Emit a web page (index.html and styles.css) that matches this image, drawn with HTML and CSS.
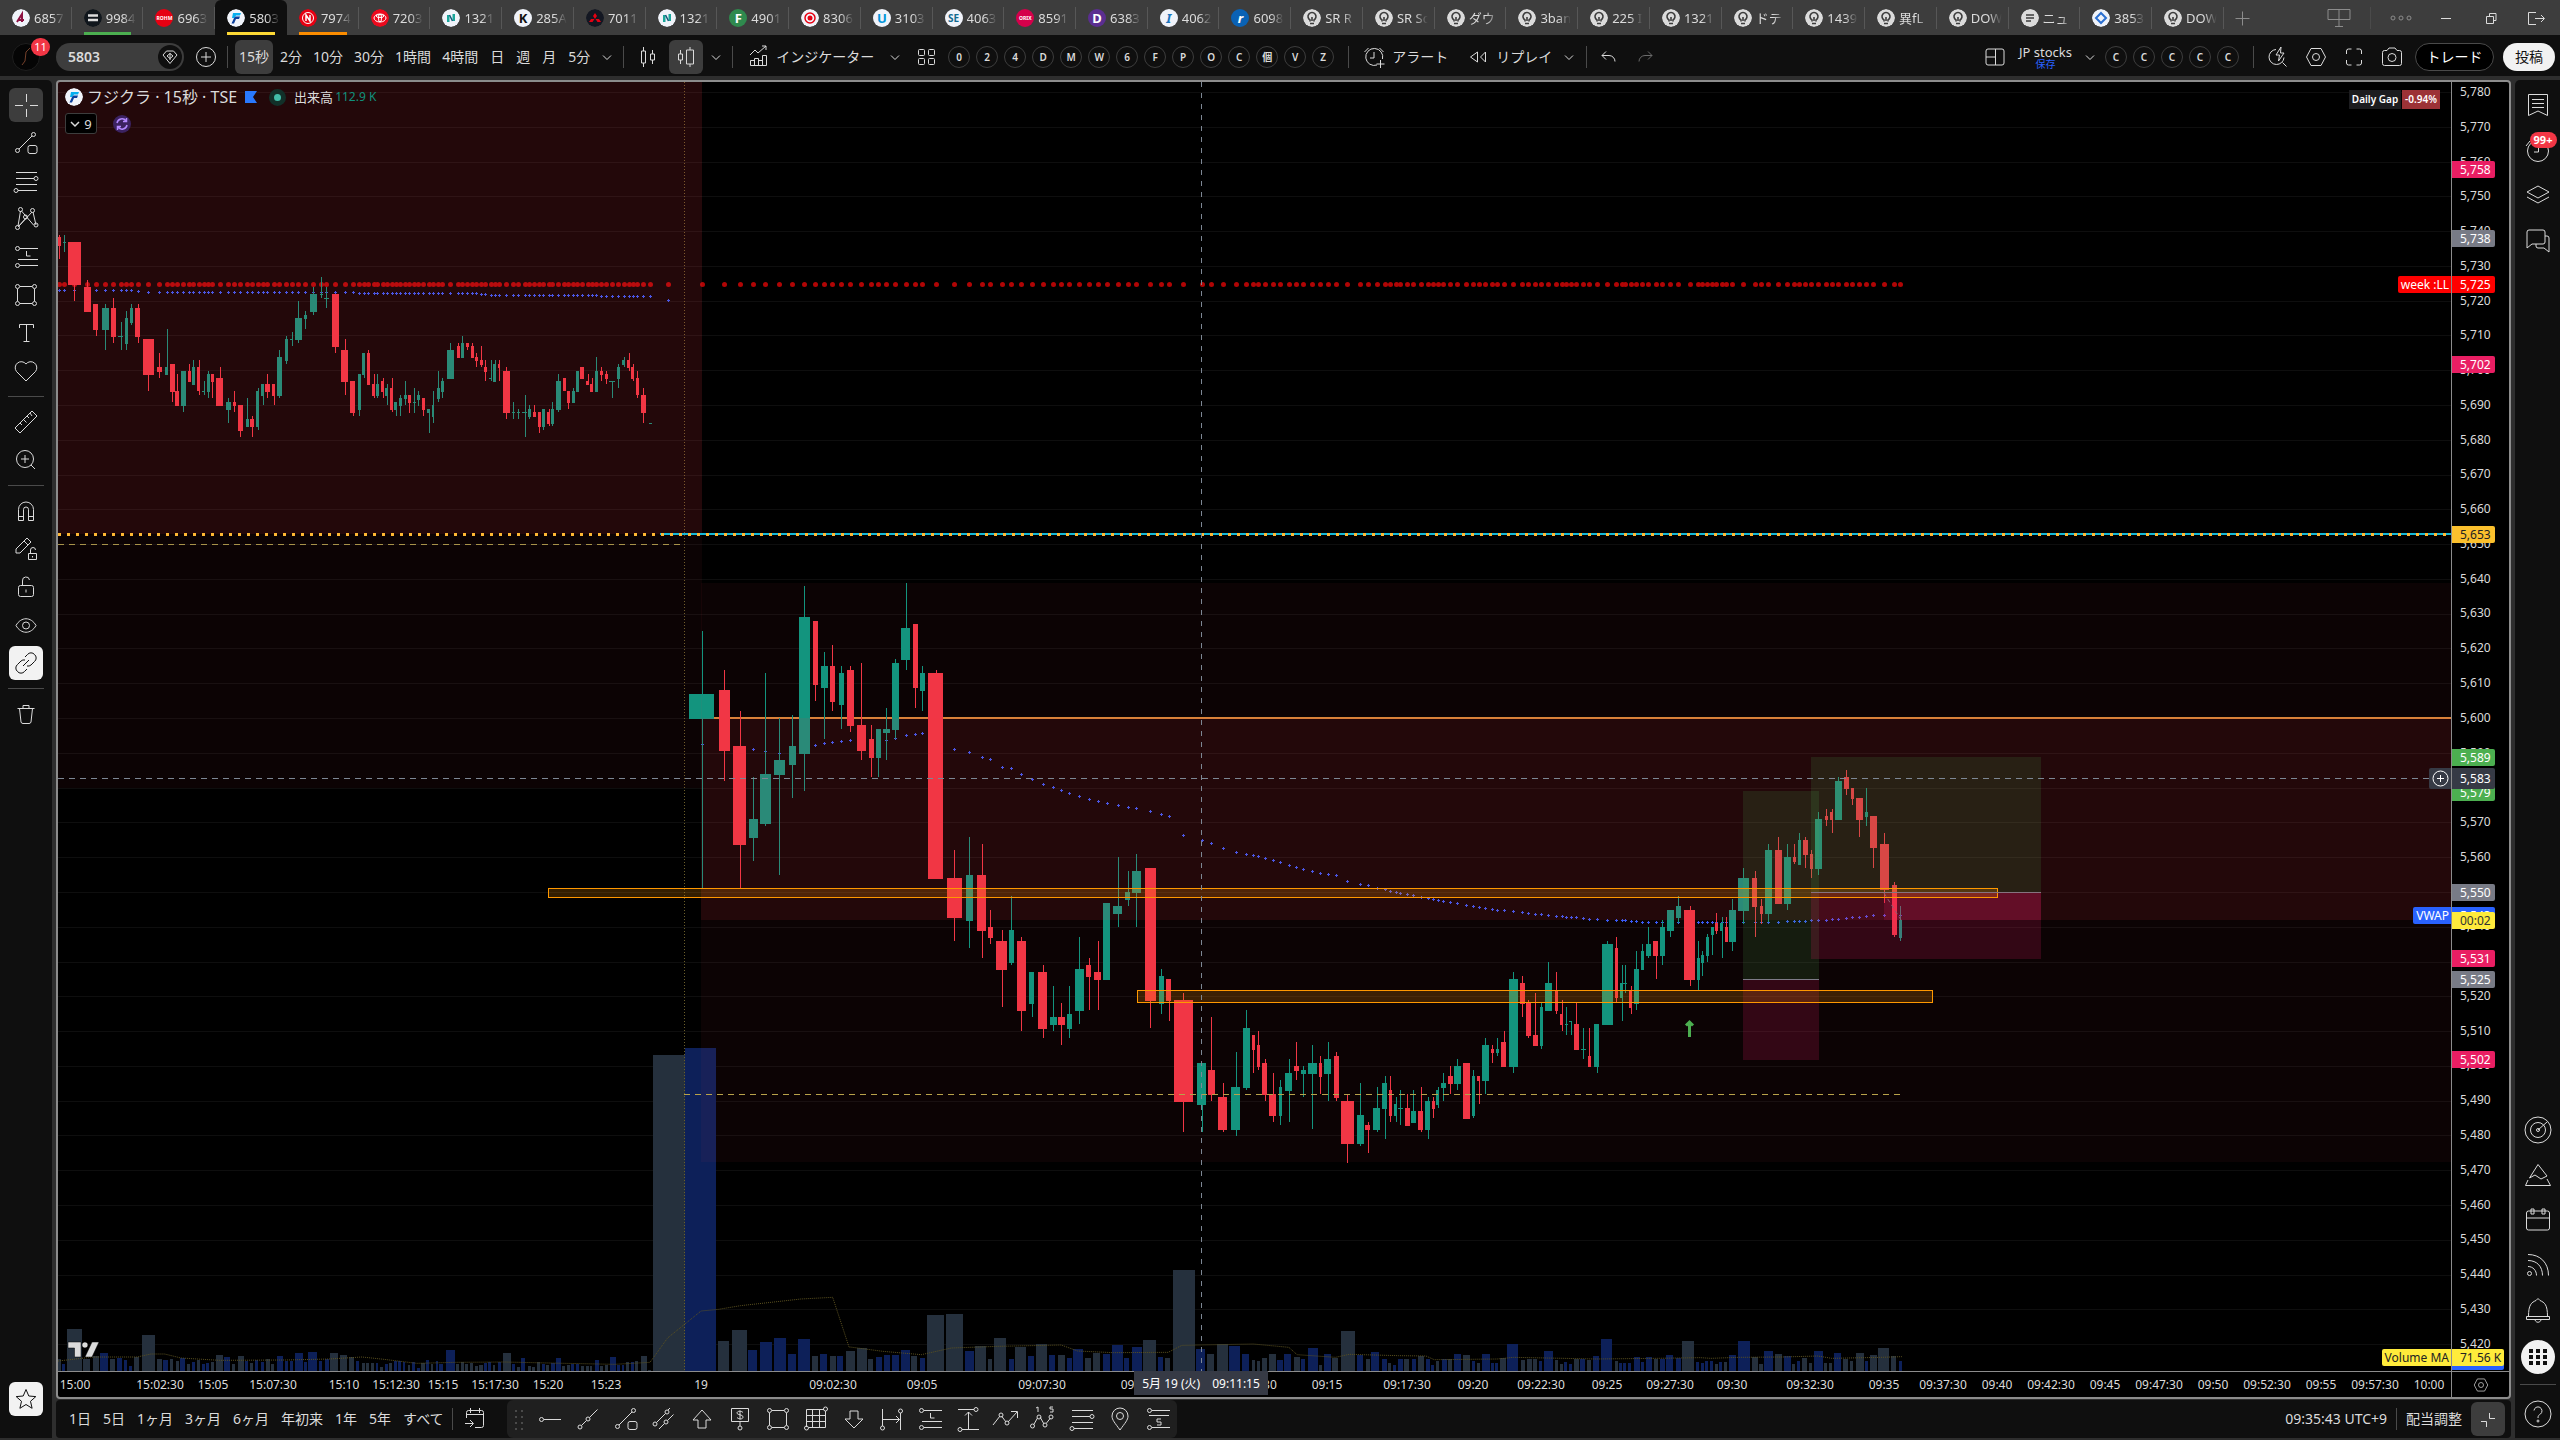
FILE: index.html
```html
<!DOCTYPE html>
<html lang="ja">
<head>
<meta charset="utf-8">
<title>5803 フジクラ</title>
<link rel="stylesheet" href="styles.css">
</head>
<body>
<svg class="defs" aria-hidden="true">
<symbol id="bulb" viewBox="0 0 18 18"><circle cx="9" cy="9" r="9" fill="#dbdbdb"/><path d="M7 12.500V11a4 4 0 1 1 4 0v1.500M7 14.500h4M9 8v4" fill="none" stroke="#3d3d3d" stroke-width="1.600"/></symbol>
<symbol id="fuji" viewBox="0 0 18 18"><circle cx="9" cy="9" r="9" fill="#f0f3fa"/><path d="M6 4h8l-1 2.500H9L7.500 9H5z" fill="#06aef0"/><path d="M8.500 7.500H13L12 10H9l-2 4.500H4.500L7 9z" fill="#0b3f9c"/></symbol>
<symbol id="next" viewBox="0 0 18 18"><circle cx="9" cy="9" r="9" fill="#f0f3fa"/><path d="M5 6h2.500v7H5zM10.500 5H13v7h-2.500z" fill="#1aa59a"/><path d="M7.500 6l3 6" stroke="#14587a" stroke-width="1.500"/></symbol>
<symbol id="chev" viewBox="0 0 28 28"><path d="M10 12.500l4 4 4-4"/></symbol>
<symbol id="plus-o" viewBox="0 0 28 28"><circle cx="14" cy="14" r="9.500"/><path d="M14 9v10M9 14h10"/></symbol>
<symbol id="candle" viewBox="0 0 28 28"><path d="M9.500 4v4M9.500 20v4M7.500 8h4v12h-4zM18.500 7v4M18.500 17v4M16.500 11h4v6h-4z"/></symbol>
<symbol id="volcandle" viewBox="0 0 28 28"><path d="M8.500 7v4M8.500 17v4M6.500 11h4v6h-4zM18 4v3M18 21v3M14.500 7h7v14h-7z"/></symbol>
<symbol id="indic" viewBox="0 0 28 28"><path d="M6 12l5-5 3 3 8-7M18 3h4v4M6.500 22.500v-5h4v5M10.500 22.500v-7h4v7M14.500 22.500v-5h4v5M18.500 22.500v-10h4v10h-16"/></symbol>
<symbol id="tiles" viewBox="0 0 28 28"><rect x="6.500" y="6.500" width="6" height="6" rx="1"/><rect x="16.500" y="6.500" width="6" height="6" rx="1"/><rect x="6.500" y="15.500" width="6" height="6" rx="1"/><rect x="16.500" y="15.500" width="6" height="6" rx="1"/></symbol>
<symbol id="alarm" viewBox="0 0 28 28"><path d="M17 22a8.500 8.500 0 1 1 5.500-6M14 9v6h-4M4.500 9l4-4M23.500 9l-4-4M20.500 17v8M16.500 21h8"/></symbol>
<symbol id="rewind" viewBox="0 0 28 28"><path d="M13.500 9l-7 5 7 5zM21.500 9l-5 5 5 5z"/></symbol>
<symbol id="undo" viewBox="0 0 28 28"><path d="M12 8.500l-4 4 4 4M8 12.500h7a6 6 0 0 1 6 6"/></symbol>
<symbol id="redo" viewBox="0 0 28 28"><path d="M16 8.500l4 4-4 4M20 12.500h-7a6 6 0 0 0-6 6"/></symbol>
<symbol id="layout" viewBox="0 0 28 28"><rect x="5" y="6" width="18" height="16" rx="2"/><path d="M14.500 6v16M5 14h9"/></symbol>
<symbol id="quick" viewBox="0 0 28 28"><path d="M12 6.500a7.500 7.500 0 1 0 8 8M18.500 19.500l4 4M17 4l-5 8h3.500l-1 6 5.500-8h-3.500z"/></symbol>
<symbol id="hex" viewBox="0 0 28 28"><path d="M9 5.500h10l4.500 8.500-4.500 8.500H9L4.500 14z"/><circle cx="14" cy="14" r="3.500"/></symbol>
<symbol id="full" viewBox="0 0 28 28"><path d="M6.500 11V8a2 2 0 0 1 2-2h3M16.500 6h3a2 2 0 0 1 2 2v3M21.500 17v3a2 2 0 0 1-2 2h-3M11.500 22h-3a2 2 0 0 1-2-2v-3"/></symbol>
<symbol id="camera" viewBox="0 0 28 28"><path d="M4.500 9.500a2 2 0 0 1 2-2H9l2-2.500h6l2 2.500h2.500a2 2 0 0 1 2 2v11a2 2 0 0 1-2 2h-15a2 2 0 0 1-2-2z"/><circle cx="14" cy="14.500" r="4"/></symbol>
<symbol id="cross" viewBox="0 0 28 28"><path d="M14.500 3v8M14.500 18v8M3 14.500h8M18 14.500h8"/></symbol>
<symbol id="line-sq" viewBox="0 0 28 28"><path d="M7 20L20 7"/><circle cx="5.500" cy="21.500" r="2"/><circle cx="21.500" cy="5.500" r="2"/><rect x="16" y="16.500" width="9" height="8" rx="2"/></symbol>
<symbol id="fib" viewBox="0 0 28 28"><path d="M4 5.500h21M4 11.500h18M4 17.500h21M6 23.500h19"/><circle cx="24" cy="11.500" r="2"/><circle cx="4" cy="23.500" r="2"/></symbol>
<symbol id="xabcd" viewBox="0 0 28 28"><path d="M6 21L8.500 6M9.500 6l12 14M7 21L20 7M21 7l3 13M6 22l8-9"/><circle cx="5.500" cy="22.500" r="2"/><circle cx="8.500" cy="4.500" r="2"/><circle cx="20.500" cy="5.500" r="2"/><circle cx="24" cy="20" r="2"/><circle cx="13.500" cy="12" r="2"/></symbol>
<symbol id="longpos" viewBox="0 0 28 28"><path d="M8 5.500h18M8 22.500h18M6 16.500h20M14.500 8v5h4"/><circle cx="5.500" cy="5.500" r="2"/><circle cx="5.500" cy="22.500" r="2"/></symbol>
<symbol id="rect" viewBox="0 0 28 28"><path d="M8 5.500h12M8 22.500h12M5.500 8v12M22.500 8v12"/><circle cx="5.500" cy="5.500" r="2"/><circle cx="22.500" cy="5.500" r="2"/><circle cx="5.500" cy="22.500" r="2"/><circle cx="22.500" cy="22.500" r="2"/></symbol>
<symbol id="text" viewBox="0 0 28 28"><path d="M7.500 9V5.500h14V9M14.500 5.500v17M11.500 22.500h6"/></symbol>
<symbol id="heart" viewBox="0 0 28 28"><path d="M14 24L4.500 14.500a6 6 0 0 1 9.500-7.500 6 6 0 0 1 9.500 7.500z"/></symbol>
<symbol id="ruler" viewBox="0 0 28 28"><path d="M3 20L20 3l5 5L8 25zM8 15l2 2M11.500 11.500l3 3M15 8l2 2M18 5l2 3"/></symbol>
<symbol id="zoomin" viewBox="0 0 28 28"><circle cx="13" cy="13" r="8.500"/><path d="M19 19l4 4M13 9v8M9 13h8"/></symbol>
<symbol id="magnet" viewBox="0 0 28 28"><path d="M6.500 23.500v-11a7.500 7.500 0 0 1 15 0v11h-5v-11a2.500 2.500 0 0 0-5 0v11zM6.500 19.500h5M16.500 19.500h5"/></symbol>
<symbol id="penlock" viewBox="0 0 28 28"><path d="M4 18v-4L15 3l4 4L8 18zM12 6l4 4M16.500 18.500h8v6h-8zM18.500 18.500V15a2.500 2.500 0 0 1 5 0M20.500 21v1.500"/></symbol>
<symbol id="lock" viewBox="0 0 28 28"><rect x="6.500" y="12.500" width="15" height="11" rx="2"/><path d="M10.500 12.500V8a3.500 3.500 0 0 1 7-1M14 16.500v3"/></symbol>
<symbol id="eye" viewBox="0 0 28 28"><path d="M4 14.500c5-9 15-9 20 0-5 9-15 9-20 0z"/><circle cx="14" cy="14.500" r="3.500"/></symbol>
<symbol id="link" viewBox="0 0 28 28"><path d="M13 8l2.500-2.500a4.500 4.500 0 0 1 7 0 4.500 4.500 0 0 1 0 7L19 16a4.500 4.500 0 0 1-4 1M15 20l-2.500 2.500a4.500 4.500 0 0 1-7 0 4.500 4.500 0 0 1 0-7L9 12a4.500 4.500 0 0 1 4-1M11 17l6-6"/></symbol>
<symbol id="trash" viewBox="0 0 28 28"><path d="M5.500 8.500h17M11 8V5.500h6V8M7.500 8.500L9 22a2 2 0 0 0 2 1.500h6a2 2 0 0 0 2-1.500l1.500-13.500"/></symbol>
<symbol id="star" viewBox="0 0 28 28"><path d="M14 4.500l2.800 6.500 7 .6-5.300 4.700 1.600 7L14 19.500l-6.100 3.800 1.600-7-5.300-4.700 7-.6z"/></symbol>
<symbol id="list" viewBox="0 0 28 28"><path d="M4.500 3.500h19v21L14 20l-9.500 4.500zM8 8.500h12M8 12.500h12M8 16.500h12"/></symbol>
<symbol id="clock" viewBox="0 0 28 28"><circle cx="14" cy="15" r="10.500"/><path d="M14.500 9v7H10M2 10l4-5"/></symbol>
<symbol id="layers" viewBox="0 0 28 28"><path d="M14 5l11 6-11 6-11-6zM3 16l11 6 11-6"/></symbol>
<symbol id="chat" viewBox="0 0 28 28"><path d="M3 22V6a2 2 0 0 1 2-2h14a2 2 0 0 1 2 2v10a2 2 0 0 1-2 2H8zM12 18v2a2 2 0 0 0 2 2h6l5 4V12a2 2 0 0 0-2-2h-2"/></symbol>
<symbol id="radar" viewBox="0 0 28 28"><circle cx="14" cy="14" r="13"/><circle cx="14" cy="14" r="7.500"/><circle cx="14" cy="14" r="1.500"/><path d="M14 14l9-8"/></symbol>
<symbol id="pyramid" viewBox="0 0 28 28"><path d="M14 3.500l9 11.500-6 3-6-4-5.500 3zM4 19l-2.500 5.500h25L23 18"/></symbol>
<symbol id="cal" viewBox="0 0 28 28"><rect x="2.500" y="5" width="23" height="19" rx="2"/><path d="M2.500 12h23M7 3h3v5H7zM18 3h3v5h-3z"/></symbol>
<symbol id="rss" viewBox="0 0 28 28"><circle cx="5.500" cy="22.500" r="2"/><path d="M4 3.500c12 0 20.500 8 20.500 21M4 9.500c9 0 14.500 6 14.500 15M4 15.500c5 0 8.500 4 8.500 9"/></symbol>
<symbol id="bell" viewBox="0 0 28 28"><path d="M4.500 20.500c0-12 3-14 7.500-16l2-2 2 2c4.500 2 7.500 4 7.500 16M2.500 20.500h23v3h-23zM11 24c1 3 5 3 6 0"/></symbol>
<symbol id="apps" viewBox="0 0 28 28"><path d="M5 6h4v4H5zM12 6h4v4h-4zM19 6h4v4h-4zM5 12h4v4H5zM12 12h4v4h-4zM19 12h4v4h-4zM5 18h4v4H5zM12 18h4v4h-4zM19 18h4v4h-4z" fill="#0f0f0f" stroke="none"/></symbol>
<symbol id="help" viewBox="0 0 28 28"><circle cx="14" cy="14" r="13"/><path d="M10 10.500a4 4 0 1 1 6.500 3.500C15 15 14 15.500 14 18"/><circle cx="14" cy="21" r="1"/></symbol>
<symbol id="goto" viewBox="0 0 28 28"><path d="M5.500 13V7.500a2 2 0 0 1 2-2h13a2 2 0 0 1 2 2v13a2 2 0 0 1-2 2H14M5.500 9.500h17M9.500 3v5M18.500 3v5M4 18.500h8M9 15l3.500 3.500L9 22"/></symbol>
<symbol id="hray" viewBox="0 0 28 28"><circle cx="5.500" cy="14.500" r="2"/><path d="M8 14.500h17"/></symbol>
<symbol id="trend" viewBox="0 0 28 28"><circle cx="6" cy="22" r="2"/><circle cx="14" cy="14" r="2"/><path d="M7.500 20.500l5-5M15.500 12.500l8-8"/></symbol>
<symbol id="channel" viewBox="0 0 28 28"><circle cx="5" cy="19" r="2"/><circle cx="17" cy="7" r="2"/><circle cx="16" cy="17" r="2"/><path d="M6.500 17.500l9-9M9 24l5.500-5.500M17.500 15.500l6-6M18 5l2-2"/></symbol>
<symbol id="up" viewBox="0 0 28 28"><path d="M14 5l9 10h-5v8h-8v-8H5z"/></symbol>
<symbol id="down" viewBox="0 0 28 28"><path d="M14 23l9-9h-5V6h-8v8H5z"/></symbol>
<symbol id="price" viewBox="0 0 28 28"><path d="M5.500 3.500h17v13h-17zM14 16.500V21M17 7.500c-2-2-6-1.500-6 .5s6 1.500 6 4-4 2.500-6 .5M14 5.500v9"/><circle cx="14" cy="23" r="2"/></symbol>
<symbol id="grid" viewBox="0 0 28 28"><path d="M4.500 4.500H22M4.500 4.500V22M7 22.500h16.500V6M4.500 10.500h19M4.500 16.500h19M10.500 4.500v18M17.500 4.500v18"/><circle cx="23.500" cy="4" r="2"/><circle cx="4.500" cy="23" r="2"/></symbol>
<symbol id="drange" viewBox="0 0 28 28"><path d="M4.500 4v17M22.500 8v17M4.500 14.500h17M18 11l3.500 3.500L18 18"/><circle cx="22.500" cy="6" r="2"/><circle cx="4.500" cy="23" r="2"/></symbol>
<symbol id="prange" viewBox="0 0 28 28"><path d="M4 4.500h16M8 24.500h17M14.500 24V7M11 10.500L14.500 7l3.500 3.500"/><circle cx="22" cy="4.500" r="2"/><circle cx="6" cy="24.500" r="2"/></symbol>
<symbol id="zig" viewBox="0 0 28 28"><path d="M1 20l7-9M9.500 11l4.500 6M16 17l9-10M19 6.500h6.500V13"/><circle cx="9" cy="10" r="2"/><circle cx="15" cy="18" r="2"/></symbol>
<symbol id="wave" viewBox="0 0 28 28"><path d="M3.500 20l4-7M10 12l4 7M16.500 18l4-5"/><circle cx="2.500" cy="21" r="2"/><circle cx="9" cy="12" r="2"/><circle cx="15" cy="20" r="2"/><circle cx="21" cy="12" r="2"/><path d="M6 3l2-1v5M23 2h-3v2h3v3h-3"/></symbol>
<symbol id="pin" viewBox="0 0 28 28"><path d="M14 25C9 18 6 15 6 11a8 8 0 0 1 16 0c0 4-3 7-8 14z"/><circle cx="14" cy="11" r="3.500"/></symbol>
<symbol id="shortpos" viewBox="0 0 28 28"><path d="M8 5.500h18M8 22.500h18M5 10.500h20M17 14h-4v3h4v3h-4"/><circle cx="5.500" cy="5.500" r="2"/><circle cx="5.500" cy="22.500" r="2"/></symbol>
<symbol id="shrink" viewBox="0 0 28 28"><path d="M15.500 8v5.500H21M7 16.500h5.500V22"/></symbol>
<symbol id="board" viewBox="0 0 28 28"><path d="M3 5.500h22v10H3zM14 15.500V22M10 22.500h8M14 5.500v10"/></symbol>
<symbol id="dots" viewBox="0 0 28 28"><circle cx="6" cy="14" r="2"/><circle cx="14" cy="14" r="2"/><circle cx="22" cy="14" r="2"/></symbol>
<symbol id="minus" viewBox="0 0 28 28"><path d="M9 14.500h10"/></symbol>
<symbol id="restore" viewBox="0 0 28 28"><path d="M9.500 12.500h7v7h-7zM12.500 12V9.500h6.500v7h-2.500"/></symbol>
<symbol id="exit" viewBox="0 0 28 28"><path d="M14 8.500H6.500v12H14M13 14.500h9M19 11l3.500 3.500L19 18"/></symbol>
<symbol id="plus" viewBox="0 0 28 28"><path d="M14.500 7.500v14M7.500 14.500h14"/></symbol>
</svg>

<header class="tabbar">
<nav class="tabs" id="tabs">
<a class="tab" href="#"><svg class="logo"><circle cx="9" cy="9" r="9" fill="#f0f3fa"/><path d="M5 13l5-8v8M7 11h5" fill="none" stroke="#8d1243" stroke-width="2"/></svg><span>6857</span></a>
<a class="tab green" href="#"><svg class="logo"><circle cx="9" cy="9" r="9" fill="#10161c"/><path d="M4 6.500h10M4 11h10" stroke="#dbdbdb" stroke-width="2.500"/></svg><span>9984</span></a>
<a class="tab" href="#"><b class="logo mini" style="--c:#e60012">ROHM</b><span>6963</span></a>
<a class="tab active yellow" href="#"><svg class="logo"><use href="#fuji"/></svg><span>5803</span></a>
<a class="tab orange" href="#"><svg class="logo"><circle cx="9" cy="9" r="9" fill="#e60012"/><circle cx="9" cy="9" r="5.500" fill="none" stroke="#fff"/><path d="M7 12V6l4 6V6" fill="none" stroke="#fff" stroke-width="1.500"/></svg><span>7974</span></a>
<a class="tab" href="#"><svg class="logo"><circle cx="9" cy="9" r="9" fill="#eb0a1e"/><g fill="none" stroke="#fff"><ellipse cx="9" cy="9" rx="6" ry="4"/><ellipse cx="9" cy="7" rx="4" ry="1.500"/><ellipse cx="9" cy="9" rx="1.500" ry="4"/></g></svg><span>7203</span></a>
<a class="tab" href="#"><svg class="logo"><use href="#next"/></svg><span>1321</span></a>
<a class="tab" href="#"><b class="logo" style="--c:#f0f3fa;--f:#111">K</b><span>285A</span></a>
<a class="tab" href="#"><svg class="logo"><circle cx="9" cy="9" r="9" fill="#131722"/><path d="M9 4l2 3-2 3-2-3zM8.500 10l-2 3H3l2-3zM9.500 10l2 3H15l-2-3z" fill="#e60012"/></svg><span>7011</span></a>
<a class="tab" href="#"><svg class="logo"><use href="#next"/></svg><span>1321</span></a>
<a class="tab" href="#"><b class="logo" style="--c:#2f8a4e">F</b><span>4901</span></a>
<a class="tab" href="#"><svg class="logo"><circle cx="9" cy="9" r="9" fill="#f0f3fa"/><circle cx="9" cy="9" r="5" fill="none" stroke="#e60012" stroke-width="1.500"/><circle cx="9" cy="9" r="2.500" fill="#e60012"/></svg><span>8306</span></a>
<a class="tab" href="#"><b class="logo" style="--c:#f0f3fa;--f:#0095d9">U</b><span>3103</span></a>
<a class="tab" href="#"><b class="logo small" style="--c:#f0f3fa;--f:#13698f">SE</b><span>4063</span></a>
<a class="tab" href="#"><b class="logo mini" style="--c:#d5004b">ORIX</b><span>8591</span></a>
<a class="tab" href="#"><b class="logo" style="--c:#5b2e91">D</b><span>6383</span></a>
<a class="tab" href="#"><b class="logo it" style="--c:#f0f3fa;--f:#1c75bc">I</b><span>4062</span></a>
<a class="tab" href="#"><b class="logo it" style="--c:#0a62b5">r</b><span>6098</span></a>
<a class="tab" href="#"><svg class="logo"><use href="#bulb"/></svg><span>SR R</span></a>
<a class="tab" href="#"><svg class="logo"><use href="#bulb"/></svg><span>SR Sc</span></a>
<a class="tab" href="#"><svg class="logo"><use href="#bulb"/></svg><span>ダウ</span></a>
<a class="tab" href="#"><svg class="logo"><use href="#bulb"/></svg><span>3ban</span></a>
<a class="tab" href="#"><svg class="logo"><use href="#bulb"/></svg><span>225 I</span></a>
<a class="tab" href="#"><svg class="logo"><use href="#bulb"/></svg><span>1321</span></a>
<a class="tab" href="#"><svg class="logo"><use href="#bulb"/></svg><span>ドテ</span></a>
<a class="tab" href="#"><svg class="logo"><use href="#bulb"/></svg><span>1439</span></a>
<a class="tab" href="#"><svg class="logo"><use href="#bulb"/></svg><span>異fL</span></a>
<a class="tab" href="#"><svg class="logo"><use href="#bulb"/></svg><span>DOW</span></a>
<a class="tab" href="#"><svg class="logo"><circle cx="9" cy="9" r="9" fill="#dbdbdb"/><path d="M5 6h8M5 9h8M5 12h5" stroke="#3d3d3d" stroke-width="1.600"/></svg><span>ニュ</span></a>
<a class="tab" href="#"><svg class="logo"><circle cx="9" cy="9" r="9" fill="#f0f3fa"/><path d="M9 4l5 5-5 5-5-5z" fill="none" stroke="#2b6fd0" stroke-width="2"/></svg><span>3853</span></a>
<a class="tab" href="#"><svg class="logo"><use href="#bulb"/></svg><span>DOW</span></a>
</nav>
<div class="window">
<button class="w-add" aria-label="タブを追加"><svg class="ic dim"><use href="#plus"/></svg></button>
<button aria-label="ボード"><svg class="ic dim"><use href="#board"/></svg></button><i class="sep"></i>
<button aria-label="メニュー"><svg class="ic dim"><use href="#dots"/></svg></button>
<button aria-label="最小化"><svg class="ic"><use href="#minus"/></svg></button>
<button aria-label="元に戻す"><svg class="ic"><use href="#restore"/></svg></button>
<button aria-label="終了"><svg class="ic"><use href="#exit"/></svg></button>
</div>
</header>

<div class="toolbar">
<button class="avatar" aria-label="アカウント"><svg width="28" height="28"><circle cx="14" cy="14" r="13.500" fill="#050505" stroke="#1f1f1f"/><path d="M10 22l3-4 1-9 4-4" fill="none" stroke="#74402a"/></svg><em>11</em></button>
<label class="search"><input value="5803" aria-label="シンボル検索"><svg width="24" height="24"><circle cx="12" cy="12" r="12" fill="#0f0f0f"/><path d="M8.500 6h7l3.500 4-7 8.500L5 10zM12 8v7M12 8.500l3 2.500-3 2.500-3-2.500z" fill="none" stroke="#dbdbdb"/></svg></label>
<button class="add" aria-label="比較"><svg class="ic"><use href="#plus-o"/></svg></button>
<i class="sep"></i>
<div class="row">
<button class="tf on">15秒</button><button class="tf slim">2分</button><button class="tf slim">10分</button><button class="tf slim">30分</button><button class="tf slim">1時間</button><button class="tf slim">4時間</button><button class="tf">日</button><button class="tf">週</button><button class="tf">月</button><button class="tf">5分</button>
<button class="ch" aria-label="時間足"><svg class="ic"><use href="#chev"/></svg></button>
</div>
<i class="sep"></i>
<div class="row">
<button class="sq" aria-label="ローソク足"><svg class="ic"><use href="#candle"/></svg></button>
<button class="sq on" aria-label="出来高ローソク"><svg class="ic"><use href="#volcandle"/></svg></button>
<button class="ch" aria-label="チャートタイプ"><svg class="ic"><use href="#chev"/></svg></button>
</div>
<i class="sep"></i>
<div class="row">
<button class="lab"><svg class="ic"><use href="#indic"/></svg>インジケーター</button>
<button class="ch wide" aria-label="お気に入り"><svg class="ic"><use href="#chev"/></svg></button>
<button aria-label="テンプレート"><svg class="ic"><use href="#tiles"/></svg></button>
</div>
<div class="rounds"><button>0</button><button>2</button><button>4</button><button>D</button><button>M</button><button>W</button><button>6</button><button>F</button><button>P</button><button>O</button><button>C</button><button>個</button><button>V</button><button>Z</button></div>
<i class="sep far"></i>
<div class="row wider">
<button class="lab"><svg class="ic"><use href="#alarm"/></svg>アラート</button>
<button class="lab"><svg class="ic"><use href="#rewind"/></svg>リプレイ</button>
</div>
<button class="ch wide" aria-label="リプレイ設定"><svg class="ic"><use href="#chev"/></svg></button>
<i class="sep near"></i>
<div class="row">
<button class="sq" aria-label="元に戻す"><svg class="ic"><use href="#undo"/></svg></button>
<button class="sq" aria-label="やり直す"><svg class="ic faint"><use href="#redo"/></svg></button>
</div>
<div class="right">
<button aria-label="レイアウト"><svg class="ic"><use href="#layout"/></svg></button>
<button class="name">JP stocks<small>保存</small></button>
<button class="ch" aria-label="レイアウト一覧"><svg class="ic"><use href="#chev"/></svg></button>
<div class="rounds"><button>C</button><button>C</button><button>C</button><button>C</button><button>C</button></div>
<i class="sep far"></i>
<div class="row">
<button class="sq" aria-label="クイック検索"><svg class="ic"><use href="#quick"/></svg></button>
<button class="sq" aria-label="設定"><svg class="ic"><use href="#hex"/></svg></button>
<button class="sq" aria-label="全画面"><svg class="ic"><use href="#full"/></svg></button>
<button class="sq" aria-label="スナップショット"><svg class="ic"><use href="#camera"/></svg></button>
</div>
<button class="trade">トレード</button>
<button class="post">投稿</button>
</div>
</div>

<main class="work">
<aside class="side">
<button class="sq on" aria-label="十字"><svg class="ic"><use href="#cross"/></svg></button>
<button class="sq" aria-label="ライン"><svg class="ic"><use href="#line-sq"/></svg></button>
<button class="sq" aria-label="フィボナッチ"><svg class="ic"><use href="#fib"/></svg></button>
<button class="sq" aria-label="パターン"><svg class="ic"><use href="#xabcd"/></svg></button>
<button class="sq" aria-label="予測"><svg class="ic"><use href="#longpos"/></svg></button>
<button class="sq" aria-label="図形"><svg class="ic"><use href="#rect"/></svg></button>
<button class="sq" aria-label="テキスト"><svg class="ic"><use href="#text"/></svg></button>
<button class="sq" aria-label="アイコン"><svg class="ic"><use href="#heart"/></svg></button>
<hr>
<button class="sq" aria-label="計測"><svg class="ic"><use href="#ruler"/></svg></button>
<button class="sq" aria-label="ズーム"><svg class="ic"><use href="#zoomin"/></svg></button>
<hr>
<button class="sq" aria-label="マグネット"><svg class="ic"><use href="#magnet"/></svg></button>
<button class="sq" aria-label="描画モード"><svg class="ic"><use href="#penlock"/></svg></button>
<button class="sq" aria-label="ロック"><svg class="ic"><use href="#lock"/></svg></button>
<button class="sq" aria-label="表示"><svg class="ic"><use href="#eye"/></svg></button>
<button class="sq white" aria-label="同期"><svg class="ic"><use href="#link"/></svg></button>
<hr>
<button class="sq" aria-label="削除"><svg class="ic"><use href="#trash"/></svg></button>
<button class="sq white last" aria-label="お気に入り"><svg class="ic"><use href="#star"/></svg></button>
</aside>

<section class="center">
<div class="chart">
<div class="plot">
<svg id="plot" viewBox="58 82 2393 1289" preserveAspectRatio="none"></svg>
<div class="legend">
<div class="sym"><svg class="logo"><use href="#fuji"/></svg><h1>フジクラ · 15秒 · TSE</h1><svg class="flag" width="12" height="12"><path d="M0 0h12L8 6l4 6H0z" fill="#2979ff"/></svg><i class="live"></i><span class="vol">出来高</span><span class="num">112.9 K</span></div>
<div class="sym2"><button class="count"><svg width="10" height="8"><path d="M1 2l4 4 4-4" fill="none" stroke="#dbdbdb" stroke-width="1.500"/></svg>9</button><svg width="18" height="18"><circle cx="9" cy="9" r="9" fill="#3b2260"/><path d="M4 8a5 5 0 0 1 9-2M14 10a5 5 0 0 1-9 2M13.500 3v3.500H10M4.500 15v-3.500H8" fill="none" stroke="#b388ff" stroke-width="1.500"/></svg></div>
</div>
<div class="gap"><span>Daily Gap</span><span>-0.94%</span></div>
<svg class="tv" width="32" height="17" viewBox="0 0 32 17"><path d="M1 1h13v15H7.500V7H1zM18 1a3 3 0 1 1-.1 0zM25 1h7l-7 15h-7z" fill="#dbdbdb" stroke="#000" stroke-width=".5"/></svg>
</div>
<div class="prices"><div class="ticks" id="ticks"></div></div>
<div class="times" id="times"><span class="cursor">5月 19 (火)<span>09:11:15</span></span></div>
<button class="corner" aria-label="スケール設定"><svg class="ic sm" viewBox="0 0 28 28"><use href="#hex"/></svg></button>
<div class="tags" id="tags"></div>
</div>

<footer class="bottom">
<div class="ranges"><button>1日</button><button>5日</button><button>1ヶ月</button><button>3ヶ月</button><button>6ヶ月</button><button>年初来</button><button>1年</button><button>5年</button><button>すべて</button></div>
<i class="sep"></i>
<button class="goto" aria-label="日付へ移動"><svg class="ic"><use href="#goto"/></svg></button>
<div class="draw">
<svg class="grip" width="8" height="22"><path d="M1 2v20M7 2v20" stroke="#4a4a4a" stroke-width="2" stroke-dasharray="2 4"/></svg>
<button class="sq" aria-label="水平レイ"><svg class="ic"><use href="#hray"/></svg></button>
<button class="sq" aria-label="トレンド"><svg class="ic"><use href="#trend"/></svg></button>
<button class="sq" aria-label="ライン"><svg class="ic"><use href="#line-sq"/></svg></button>
<button class="sq" aria-label="チャネル"><svg class="ic"><use href="#channel"/></svg></button>
<button class="sq" aria-label="上矢印"><svg class="ic"><use href="#up"/></svg></button>
<button class="sq" aria-label="価格"><svg class="ic"><use href="#price"/></svg></button>
<button class="sq" aria-label="長方形"><svg class="ic"><use href="#rect"/></svg></button>
<button class="sq" aria-label="グリッド"><svg class="ic"><use href="#grid"/></svg></button>
<button class="sq" aria-label="下矢印"><svg class="ic"><use href="#down"/></svg></button>
<button class="sq" aria-label="日付範囲"><svg class="ic"><use href="#drange"/></svg></button>
<button class="sq" aria-label="ロング"><svg class="ic"><use href="#longpos"/></svg></button>
<button class="sq" aria-label="価格範囲"><svg class="ic"><use href="#prange"/></svg></button>
<button class="sq" aria-label="パス"><svg class="ic"><use href="#zig"/></svg></button>
<button class="sq" aria-label="波動"><svg class="ic"><use href="#wave"/></svg></button>
<button class="sq" aria-label="リトレースメント"><svg class="ic"><use href="#fib"/></svg></button>
<button class="sq" aria-label="ピン"><svg class="ic"><use href="#pin"/></svg></button>
<button class="sq" aria-label="ショート"><svg class="ic"><use href="#shortpos"/></svg></button>
</div>
<div class="status"><button>09:35:43 UTC+9</button><i class="sep"></i><button>配当調整</button><button class="sq on" aria-label="縮小"><svg class="ic"><use href="#shrink"/></svg></button></div>
</footer>
</section>

<aside class="side2">
<button aria-label="ウォッチリスト"><svg class="ic"><use href="#list"/></svg></button>
<button class="alerts" aria-label="アラート"><svg class="ic"><use href="#clock"/></svg><em>99+</em></button>
<button aria-label="オブジェクト"><svg class="ic"><use href="#layers"/></svg></button>
<button aria-label="チャット"><svg class="ic"><use href="#chat"/></svg></button>
<button class="low" aria-label="スクリーナー"><svg class="ic"><use href="#radar"/></svg></button>
<button aria-label="パイン"><svg class="ic"><use href="#pyramid"/></svg></button>
<button aria-label="カレンダー"><svg class="ic"><use href="#cal"/></svg></button>
<button aria-label="ニュース"><svg class="ic"><use href="#rss"/></svg></button>
<button aria-label="通知"><svg class="ic"><use href="#bell"/></svg></button>
<button class="apps" aria-label="アプリ"><svg class="ic"><use href="#apps"/></svg></button>
<hr>
<button aria-label="ヘルプ"><svg class="ic"><use href="#help"/></svg></button>
</aside>
</main>
<script src="chart.js"></script>
</body>
</html>
```

FILE: styles.css
```css
* { box-sizing: border-box; }
body {
  margin: 0;
  height: 100vh;
  display: flex;
  flex-direction: column;
  background: #2e2e2e;
  color: #dbdbdb;
  font: 14px/20px "Noto Sans", "Noto Sans CJK JP", sans-serif;
  overflow: hidden;
}
button {
  padding: 0;
  border: 0;
  background: none;
  color: inherit;
  font: inherit;
  display: flex;
  align-items: center;
  justify-content: center;
  white-space: nowrap;
}
.defs { position: absolute; width: 0; height: 0; }
.ic { width: 28px; height: 28px; display: block; fill: none; stroke: #dbdbdb; flex: none; }
.ic.dim { stroke: #8c8c8c; }
.ic.faint { stroke: #6a6a6a; }
.ic.sm { width: 20px; height: 20px; }
.sep { width: 1px; height: 22px; background: #4a4a4a; flex: none; }
.sq { width: 34px; height: 34px; border-radius: 6px; flex: none; }
.on { background: #3d3d3d; }
.white { background: #f2f2f2; }
.white .ic { stroke: #0f0f0f; }
em { font-style: normal; }

.tabbar { height: 35px; display: flex; background: #3d3d3d; flex: none; }
.tabs { display: flex; flex: 1; min-width: 0; }
.tab {
  position: relative;
  flex: 1 1 0;
  min-width: 0;
  display: flex;
  align-items: center;
  gap: 4px;
  padding: 0 3px 0 12px;
  color: #dbdbdb;
  font-size: 13px;
  text-decoration: none;
}
.tab::before { content: ""; position: absolute; right: 0; top: 7px; width: 1px; height: 22px; background: #575757; }
.tab span {
  flex: 1;
  overflow: hidden;
  white-space: nowrap;
  mask-image: linear-gradient(90deg, #000 50%, transparent 88%);
}
.tab.active { background: #0f0f0f; border-radius: 6px 6px 0 0; }
.tab.active::before { display: none; }
.tab::after { content: ""; position: absolute; left: 12px; right: 12px; bottom: 0; height: 3px; }
.tab.green::after { background: #4caf50; }
.tab.yellow::after { background: #fdd835; }
.tab.orange::after { background: #fb8c00; }
.logo { width: 18px; height: 18px; flex: none; border-radius: 9px; background: var(--c); color: var(--f, #fff); text-align: center; font: 700 13px/18px "Noto Sans", sans-serif; }
.logo.small { font-size: 10px; }
.logo.mini { font-size: 5px; }
.logo.it { font-style: italic; }
.window { width: 336px; display: flex; align-items: center; justify-content: space-between; padding: 0 10px 0 4px; flex: none; }
.w-add { margin-right: 52px; }

.toolbar { height: 41px; display: flex; align-items: center; padding: 3px 5px 0 12px; background: #0f0f0f; flex: none; font-size: 14px; }
.toolbar > .sep, .right > .sep { margin: 0 7px; }
.row { display: flex; gap: 4px; align-items: center; }
.row.wider { gap: 8px; }
.avatar { position: relative; width: 28px; height: 28px; margin-right: 16px; }
.avatar em { position: absolute; left: 19px; top: -5px; width: 19px; height: 18px; border-radius: 9px; background: #f23645; color: #fff; font-size: 11px; line-height: 18px; }
.search { width: 128px; height: 28px; display: flex; align-items: center; background: #3d3d3d; border-radius: 14px; padding: 0 2px 0 12px; margin-right: 8px; }
.search input { width: 0; flex: 1; border: 0; padding: 0; background: none; color: #dbdbdb; font: 600 14px/20px "Noto Sans", sans-serif; }
.tf { height: 34px; padding: 0 4px; border-radius: 6px; }
.tf.slim { padding-left: 3px; }
.ch { width: 18px; height: 34px; overflow: hidden; flex: none; }
.ch.wide { width: 26px; }
.lab { gap: 4px; padding: 0 4px; }
.rounds { display: flex; gap: 6px; margin-left: 8px; }
.rounds button { width: 22px; height: 22px; border: 1px solid #3d3d3d; border-radius: 11px; font-size: 10px; font-weight: 600; }
.toolbar .sep.far { margin: 0 7px 0 14px; }
.toolbar .sep.near { margin: 0 4px; }
.right { margin-left: auto; display: flex; align-items: center; }
.name { flex-direction: column; line-height: 14px; margin: 0 9px 0 10px; font-size: 13px; }
.name small { font-size: 10px; line-height: 10px; color: #2962ff; }
.right .rounds { margin-left: 6px; }
.trade { width: 79px; height: 28px; margin: 0 9px 0 6px; border: 1px solid #4a4a4a; border-radius: 14px; background: #000; color: #fff; }
.post { width: 52px; height: 28px; border-radius: 14px; background: #f2f2f2; color: #0f0f0f; }

.work { flex: 1; min-height: 0; display: flex; gap: 4px; padding: 4px 0 2px; }
.side { width: 52px; background: #0f0f0f; border-radius: 0 5px 0 0; padding: 8px 0 22px; display: flex; flex-direction: column; align-items: center; gap: 4px; flex: none; }
hr { width: 36px; height: 1px; margin: 4px 0; border: 0; background: #4a4a4a; flex: none; }
.last { margin-top: auto; }
.side2 { width: 45px; background: #0f0f0f; border-radius: 5px 0 0 0; padding: 2px 0 2px; display: flex; flex-direction: column; align-items: center; flex: none; }
.side2 button { width: 44px; height: 45px; flex: none; }
.side2 .low { margin-top: auto; }
.side2 .apps { width: 34px; height: 34px; margin: 8px 0 4px; border-radius: 17px; background: #f2f2f2; }
.side2 hr { margin: 6px 0; }
.alerts { position: relative; }
.alerts em { position: absolute; left: 14px; top: 5px; width: 27px; height: 16px; border-radius: 8px; background: #f23645; color: #fff; font: 700 11px/16px "Noto Sans", sans-serif; }

.center { flex: 1; min-width: 0; display: flex; flex-direction: column; gap: 1px; }
.chart {
  position: relative;
  flex: 1;
  min-height: 0;
  display: grid;
  grid-template: minmax(0, 1fr) 26px / minmax(0, 1fr) 58px;
  border: 2px solid #8c8c8c;
  border-radius: 4px;
  background: #000;
}
.plot { position: relative; min-width: 0; }
#plot { display: block; width: 100%; height: 100%; }
.legend { position: absolute; left: 7px; top: 4px; }
.sym { display: flex; align-items: center; height: 22px; }
.sym h1 { margin: 0 8px 0 4px; font-size: 16px; line-height: 22px; font-weight: 400; }
.live { width: 17px; height: 17px; margin: 0 8px 0 12px; border: 5px solid #123029; border-radius: 9px; background: #42bda8; }
.vol { font-size: 13px; }
.num { margin-left: 2px; font-size: 12px; color: #10917c; }
.sym2 { display: flex; align-items: center; gap: 16px; margin-top: 5px; }
.count { width: 32px; height: 21px; gap: 4px; border: 1px solid #3d3d3d; border-radius: 3px; background: #000; font-size: 13px; }
.gap { position: absolute; right: 11px; top: 8px; display: flex; gap: 1px; font: 600 10px/19px "Noto Sans", sans-serif; color: #fff; text-align: center; }
.gap span { width: 38px; background: #9c3236; white-space: nowrap; }
.gap span:first-child { width: 52px; background: #1c1c1f; }
.tv { position: absolute; left: 9px; bottom: 13px; }
.prices { border-left: 1px solid #8c8c8c; font-size: 12px; line-height: 18px; overflow: hidden; }
.ticks { height: 100%; display: flex; flex-direction: column; justify-content: space-between; padding: 1px 0 18px 8px; }
.times { position: relative; border-top: 1px solid #8c8c8c; font-size: 12px; line-height: 26px; }
.times > span { position: absolute; transform: translateX(-50%); white-space: nowrap; }
.times .cursor { left: 48%; width: 134px; top: -1px; height: 24px; display: flex; justify-content: center; gap: 12px; background: #363a45; color: #fff; z-index: 2; }
.corner { border: solid #8c8c8c; border-width: 1px 0 0 1px; }
.tags { position: absolute; left: 0; right: 0; top: 0; bottom: 26px; pointer-events: none; }
.tag { position: absolute; right: 14px; width: 43px; height: 17px; margin-top: -8px; padding-left: 8px; border-radius: 0 2px 2px 0; color: #fff; font-size: 12px; line-height: 17px; white-space: nowrap; }
.tag.tall { height: 21px; margin-top: -10px; line-height: 21px; }
.tag.broad { right: 5px; width: 52px; }
.tag b { position: absolute; right: 100%; top: 0; height: 100%; margin-right: 1px; padding: 0 2px 0 3px; border-radius: 2px 0 0 2px; font-weight: 400; background: inherit; }
.tag b svg { display: block; width: 17px; height: 17px; margin: 2px 0; fill: none; stroke: #fff; }

.bottom { height: 38px; display: flex; align-items: center; background: #0f0f0f; border-radius: 4px; overflow: hidden; flex: none; }
.ranges { display: flex; gap: 12px; margin: 0 8px 0 13px; }
.goto { width: 44px; }
.draw { display: flex; align-items: center; gap: 4px; height: 38px; margin-left: 10px; padding: 0 2px 0 8px; background: #1f1f1f; border-radius: 6px; }
.grip { margin-right: 6px; }
.status { margin-left: auto; display: flex; align-items: center; gap: 9px; padding-right: 6px; }
```

FILE: chart.js
```js
// Each block of samples is stored on its own grid; `o` is its origin and `u` its unit in plot coordinates.
const morning = { o: [640, 540], u: [2.24, 2.45] };
const prev = { o: [0, 80], u: [2.24, 2.306] };
const later = { o: [1320, 740], u: [2.119, 3] };

// centre, width, high, body top, body bottom, low
prev.candles = `r133,8,357,363,383,413 g144,6,357,374,376,397 r166,29,374,374,473,510 r196,16,461,477,535,535 r214,12,517,517,576,590 g236,16,517,526,576,623 r254,10,503,526,593,606 g270,12,558,590,592,623 g283,7,533,549,609,623 g294,7,517,526,560,565 r308,12,517,526,593,606 r332,25,597,597,680,717 r357,11,630,662,673,687 g373,6,574,662,680,680 r386,11,655,655,719,742 r397,8,678,717,752,752 g411,12,671,671,752,766 r424,7,655,671,696,696 g433,6,646,662,703,703 r445,7,646,662,717,726 g456,6,694,717,719,726 g467,8,671,678,719,733 r476,7,678,678,696,733 r492,16,662,687,752,752 g511,11,733,742,761,791 r525,7,717,742,752,766 r538,11,749,749,809,823 g554,7,733,782,800,800 r565,8,775,782,800,823 g577,7,710,717,800,807 g588,7,701,701,729,749 r599,11,678,701,719,733 r613,7,701,701,729,749 g626,12,623,639,729,733 g641,7,590,597,648,655 g653,6,581,597,599,613 g668,15,510,549,600,606 g684,7,533,542,551,574 g702,16,477,493,535,542 g720,6,454,493,496,503 g731,11,477,502,505,526 r751,15,493,493,616,630 r772,15,597,623,696,726 r790,11,694,694,768,775 g805,7,678,678,761,775 g815,7,630,630,680,687 r825,7,623,630,703,703 r837,7,678,701,729,733 g845,7,678,701,729,733 r857,8,687,694,719,733 g866,6,701,710,729,749 r877,8,687,710,761,766 g886,7,742,742,761,775 g897,7,726,733,752,775 g908,7,694,726,735,749 r917,7,726,726,745,768 g928,6,710,742,744,768 g937,7,717,726,738,752 r948,7,733,733,761,775 g960,7,758,758,768,814 g970,6,717,749,777,791 g982,6,671,710,735,742 g991,6,687,694,719,733 g1009,16,606,623,689,689 r1027,7,606,613,641,641 g1036,6,590,606,641,641 r1047,7,606,606,616,623 r1058,6,606,613,641,641 r1067,7,630,639,648,662 r1078,7,613,646,657,662 r1087,6,646,662,673,694 g1099,6,646,687,689,694 g1108,7,646,655,696,696 r1118,6,646,655,664,694 r1134,15,662,671,768,782 g1150,6,742,766,768,782 g1161,6,758,766,768,782 g1175,11,726,766,768,823 g1186,6,749,758,777,782 r1197,7,749,766,777,777 r1208,7,766,766,800,814 g1217,7,758,758,800,807 r1229,7,758,766,794,798 g1237,6,742,758,794,798 g1251,12,678,694,761,766 r1264,7,687,687,717,717 r1273,8,717,717,745,758 g1284,7,710,717,745,745 g1293,7,671,671,719,719 r1304,8,662,662,689,689 r1316,6,678,694,703,703 r1325,7,687,701,719,719 g1336,7,639,671,719,719 r1347,7,662,671,680,694 r1358,6,671,678,689,701 g1371,12,694,694,696,733 g1385,7,655,662,689,710 g1397,7,639,646,657,662 r1408,7,630,646,664,671 r1417,7,655,662,689,694 r1428,7,671,687,726,733 r1441,11,710,726,768,791 g1457,6,791,791,793,793`;
morning.candles = `g138,56,223,377,439,855 r189,25,318,367,517,590 r223,29,419,505,747,855 g254,20,581,684,730,786 g281,24,326,573,696,701 g312,25,437,539,576,821 g341,15,429,505,551,632 g368,25,113,189,524,615 r393,11,198,198,355,394 g413,16,274,309,363,488 r431,11,257,309,397,419 g451,11,309,326,404,463 r471,15,309,318,456,470 r496,20,301,453,517,539 r518,11,453,488,534,581 g534,11,463,463,534,581 g552,16,412,463,473,539 g572,16,292,301,465,488 g595,20,105,216,294,318 r617,11,206,206,363,412 g632,11,309,326,370,419 r662,34,318,326,831,831 r704,33,759,828,926,982 g738,16,728,821,933,1000 r765,20,745,821,958,1024 r785,11,906,948,975,990 r810,25,955,982,1053,1144 g832,11,872,955,1036,1041 r854,21,973,982,1154,1203 g877,12,1058,1058,1137,1169 r902,20,1041,1058,1198,1220 g926,16,1093,1169,1188,1203 r944,16,1134,1169,1188,1237 g962,12,1093,1161,1198,1220 g984,21,973,1051,1154,1186 r1005,11,1024,1041,1071,1151 r1025,16,982,1058,1078,1151 g1045,16,889,889,1078,1078 g1070,20,777,897,916,948 g1092,12,811,862,882,897 g1112,20,769,811,865,948 r1143,25,804,804,1129,1196 g1168,11,1051,1068,1137,1161 r1184,11,1076,1076,1129,1178 r1217,43,1110,1127,1377,1450 g1258,20,1281,1281,1384,1450 r1280,16,1169,1298,1360,1374 r1305,20,1330,1365,1445,1450 g1334,20,1254,1340,1445,1460 g1358,15,1151,1196,1343,1347 r1374,7,1213,1213,1249,1306 r1385,7,1203,1237,1291,1298 r1399,11,1272,1281,1360,1374 r1417,16,1306,1357,1411,1426 g1434,7,1323,1340,1411,1433 g1453,15,1272,1306,1350,1426 r1470,11,1230,1289,1301,1323 g1486,11,1289,1298,1308,1365 g1506,20,1237,1281,1308,1443 r1524,7,1264,1281,1316,1357 g1540,16,1230,1272,1308,1374 r1560,11,1254,1264,1367,1374`;
later.candles = `r58,28,1062,1083,1212,1269 g85,15,1029,1125,1212,1218 r101,11,1146,1155,1170,1239 g120,15,1041,1104,1170,1176 g137,11,1008,1029,1107,1197 r149,7,1008,1050,1128,1146 g160,6,1071,1092,1128,1146 g170,11,1050,1104,1106,1155 r185,11,1062,1104,1158,1158 g198,10,1050,1113,1149,1149 r213,10,1041,1113,1170,1176 g228,11,1071,1083,1170,1197 r240,7,1071,1083,1107,1134 g249,6,1041,1050,1095,1104 g261,11,999,1029,1044,1083 r276,11,978,1008,1032,1062 g291,15,957,978,1032,1050 r310,15,969,969,1137,1137 g325,6,990,1008,1128,1134 r336,6,1008,1008,1023,1092 g350,15,894,915,1023,1062 r365,7,915,927,939,969 g376,6,894,927,939,948 r389,10,873,906,981,981 g410,20,696,717,981,999 r429,10,708,729,792,831 r441,11,780,787,888,894 r456,11,759,885,918,918 g469,7,787,801,918,927 g484,15,666,729,813,813 r501,6,696,751,813,822 r512,6,780,822,855,873 g522,6,801,852,854,885 g531,6,843,843,845,885 r543,11,787,852,930,930 g558,11,864,927,929,957 r571,6,864,948,981,981 g586,10,852,852,981,999 g609,23,603,612,855,855 r628,6,591,624,774,787 g639,6,675,729,774,843 g647,8,675,729,731,760 r658,6,738,751,804,822 g670,11,633,687,792,810 g683,7,612,633,690,690 g696,10,561,612,648,654 r711,10,603,603,648,717 g725,11,540,561,648,675 g742,15,510,510,573,591 g759,11,468,498,534,549 r783,24,498,510,720,738 g802,6,603,654,720,751 g810,7,633,645,669,708 g821,6,582,591,648,666 g831,7,561,561,585,645 r840,6,519,549,573,582 g851,6,531,549,573,654 r861,7,531,561,606,606 g874,14,477,510,606,633 g897,23,384,414,513,552 r921,11,393,414,501,591 r935,7,477,498,522,552 g950,15,312,330,522,546 r971,15,291,330,492,492 g990,15,312,351,492,510 r1005,7,312,351,366,372 g1016,6,279,300,375,375 r1028,11,291,300,345,384 r1041,7,330,342,387,414 g1056,15,216,237,387,405 r1073,6,207,228,240,258 r1084,6,207,216,240,279 g1098,15,111,123,240,240 r1115,11,90,111,147,165 r1128,7,144,144,177,195 r1143,15,174,174,240,291 g1158,6,144,216,231,258 r1172,15,228,228,324,384 r1196,19,279,312,450,489 r1217,11,426,435,585,591 g1230,6,498,540,594,603`;

prev.vwap = '130,485 300,485 332,488 476,488 520,490 790,490 812,492 1075,492 1090,495 1340,495 1345,497 1457,497 1497,508';
morning.vwap = '138,487 254,513 281,516 312,521 393,503 413,498 471,489 552,489 595,479 632,474 704,513 738,520 785,538 810,555 832,560 854,574 902,597 944,613 984,628 1025,640 1070,650 1112,656 1143,665 1184,675 1217,724 1258,734 1305,754 1334,763 1385,775 1453,795 1506,812 1560,822';
later.vwap = '58,424 101,436 149,452 198,466 249,481 291,490 350,505 389,511 429,517 484,526 543,532 586,538 609,541 647,541 670,544 725,547 935,547 990,544 1041,541 1084,538 1128,532 1172,526 1230,526';

// left, right, top; g = grey, b = blue
const volume = [
  { o: [0, 980], data: `g106,111,1137 b113,119,1152 g122,150,1047 g151,164,1137 g170,181,1129 b182,197,1119 g201,210,1137 b213,222,1134 b226,232,1140 b235,241,1158 g244,253,1131 g259,283,1065 g286,295,1137 b297,306,1140 g310,315,1137 g321,326,1143 b328,337,1134 g341,346,1152 b350,355,1146 g359,364,1140 b368,373,1152 b375,381,1150 g385,390,1146 g394,407,1125 b408,419,1131 g423,428,1152 g434,445,1128 b447,452,1143 g456,461,1149 b465,470,1140 b475,481,1146 g485,492,1137 g494,500,1152 b505,516,1128 b520,525,1143 b529,534,1143 b538,552,1119 b555,559,1146 b562,578,1116 b582,587,1143 b593,600,1137 g602,616,1119 g620,633,1125 g637,646,1131 b649,655,1143 g660,665,1149 g667,673,1149 g676,682,1149 b686,690,1150 g693,698,1161 b702,707,1152 g709,715,1149 b718,724,1143 b725,731,1143 b734,739,1146 g743,748,1155 b751,756,1146 b760,765,1164 g768,774,1149 b777,782,1140 g785,790,1152 b794,799,1143 b801,807,1152 b813,830,1110 g832,837,1152 g841,846,1146 g848,853,1152 g857,862,1149 g866,872,1158 g874,880,1155 b882,887,1149 b889,895,1146 g898,903,1155 b907,913,1146 g917,932,1119 b934,939,1152 g943,948,1161 b950,957,1134 g963,968,1158 g970,975,1161 g979,984,1146 b988,993,1152 g995,1001,1155 b1005,1011,1149 b1014,1023,1134 g1025,1030,1158 g1034,1039,1155 b1041,1047,1152 b1050,1055,1152 g1059,1064,1158 g1068,1073,1158 g1075,1080,1158 b1085,1092,1140 g1094,1100,1158 g1103,1108,1155 b1112,1123,1131 b1125,1130,1155 b1133,1138,1155 g1141,1147,1146 b1150,1155,1146 g1157,1163,1143 g1169,1180,1128 g1182,1186,1170 g1191,1248,225 b1249,1305,204 g1309,1329,1083 g1335,1362,1050 b1364,1380,1110 b1386,1408,1086 b1411,1433,1074 b1436,1451,1122 b1455,1477,1077 g1480,1491,1128 b1495,1508,1122 g1513,1524,1128 b1526,1537,1128 g1542,1559,1113`,
    ma: '106,1143 170,1131 250,1131 275,1122 300,1122 330,1134 400,1141 520,1140 600,1137 660,1131 700,1138 760,1150 830,1147 920,1146 1000,1149 1120,1153 1185,1147 1217,1074 1278,993 1310,988 1350,977 1400,968 1460,957 1518,952 1548,1102' },
  { o: [850, 1230], data: `g0,9,363 g13,31,354 g33,42,387 b47,58,381 b62,73,375 b77,89,375 b93,109,360 g111,122,378 b128,137,384 g140,171,255 g175,206,252 b210,226,363 g228,248,348 g252,259,387 g263,284,324 b290,299,387 g301,321,351 b325,335,378 g339,359,342 b363,374,375 g379,392,375 b396,405,384 b407,425,357 g428,439,384 g443,456,369 b461,474,372 b478,498,345 b500,509,384 b514,532,351 g534,558,330 b562,571,381 g574,583,384 g589,629,120 b631,647,357 g651,664,372 g669,689,342 b691,711,348 b715,727,372 g733,738,390 g742,748,393 g751,760,384 g764,777,372 b779,790,390 b791,804,372 g810,820,381 b822,830,387 b835,853,354 g855,861,405 b864,877,372 g879,890,384 g895,921,303 b924,935,375 g941,948,387 b950,965,366 b970,979,387 g981,986,399 b990,995,405 b999,1008,387 g1010,1019,387 b1024,1032,387 g1036,1047,378 b1050,1057,387 b1059,1064,405 g1068,1074,393 b1079,1088,387 g1090,1097,387 b1101,1114,372 g1118,1130,375 b1134,1140,393 g1143,1149,399 b1152,1167,372 b1169,1174,399 b1176,1181,399 g1185,1195,384 b1198,1218,342 g1223,1231,390 g1234,1243,387 g1245,1253,387 b1256,1262,393 b1265,1282,363 g1285,1291,390 g1295,1300,402 b1302,1307,396 b1311,1316,402 g1320,1329,387 b1331,1340,387 g1344,1351,390 b1355,1366,378 b1369,1389,327 g1395,1400,393 b1402,1407,399 b1409,1414,399 b1418,1424,399 b1429,1440,381 b1442,1448,396 b1451,1462,381 g1465,1473,387 b1477,1486,387 b1488,1501,375 b1505,1515,384 g1517,1539,333 b1542,1548,396`,
    ma: '0,351 60,364 130,374 185,354 270,349 385,345 415,363 480,368 580,367 605,346 735,342 800,352 815,374 885,382 910,373 1000,377 1050,378 1065,389 1180,387 1210,382 1360,387 1470,385 1550,383' },
  { o: [1700, 1230], data: `b2,7,399 b9,15,393 b18,24,393 g27,33,402 b35,41,396 g44,50,396 b53,66,375 b69,91,333 g95,106,381 g108,114,402 b117,133,363 g137,150,372 b153,166,378 g168,173,402 b177,182,393 g186,195,384 g199,204,399 b208,224,363 g226,232,399 g235,241,399 b244,257,369 g261,270,387 g273,279,393 g284,299,369 b301,306,393 g310,323,375 g325,345,354 g348,358,378 b363,368,393`,
    ma: '20,385 70,382 150,381 215,378 240,385 330,382 368,380' }
];

const out = [];
const rect = (x, y, w, h, fill, extra = '') => out.push(`<rect x="${x}" y="${y}" width="${w}" height="${h}" fill="${fill}" ${extra}/>`);
const line = (x1, y1, x2, y2, color, w = 1, dash = '') => out.push(`<path d="M${x1} ${y1}L${x2} ${y2}" stroke="${color}" stroke-width="${w}" stroke-dasharray="${dash}" fill="none"/>`);
const nums = s => s.split(',').map(Number);
const R = Math.round;

for (let i = 0; i <= 36; i++) rect(58, R(92 + i * 34.78), 2393, 1, '#0e0e0e');

const maPoints = [];
for (const v of volume) {
  for (const item of v.data.split(' ')) {
    const [a, b, t] = nums(item.slice(1));
    const x = R(v.o[0] + a / 1.823), y = R(v.o[1] + t / 3);
    rect(x, y, R(v.o[0] + b / 1.823) - x, 1371 - y, item[0] === 'g' ? '#25303d' : '#0d2059');
  }
  for (const p of v.ma.split(' ')) { const [x, y] = nums(p); maPoints.push(`${v.o[0] + x / 1.823},${v.o[1] + y / 3}`); }
}
out.push(`<polyline points="${maPoints.join(' ')}" fill="none" stroke="#5c5220" stroke-dasharray="1 1" stroke-width="1"/>`);
line(684.5, 82, 684.5, 1371, '#6b5f2a', 1, '1 2');
line(701, 718, 2451, 718, '#d98a38', 2);

const sessions = [prev, morning, later];
const bodies = [];
const vw = [];
for (const s of sessions) for (const p of s.vwap.split(' ')) { const [x, y] = nums(p); vw.push([s.o[0] + x / s.u[0], s.o[1] + y / s.u[1]]); }
const vwapAt = x => {
  const i = Math.max(1, vw.findIndex(p => p[0] >= x - 1));
  const [a, b] = [vw[i - 1], vw[i]];
  return a[1] + (b[1] - a[1]) * (x - a[0]) / (b[0] - a[0]);
};
const mark = x => {
  out.push(`<circle cx="${x + .5}" cy="284.500" r="2.500" fill="#b00505"/>`);
  const y = R(vwapAt(x));
  rect(x - 1, y, 3, 1, '#2f5cff'); rect(x, y - 1, 1, 3, '#2f5cff');
};
mark(668);
for (const s of sessions) for (const item of s.candles.split(' ')) {
  const [c, w, hi, top, bot, lo] = nums(item.slice(1));
  const X = v => R(s.o[0] + v / s.u[0]), Y = v => R(s.o[1] + v / s.u[1]);
  mark(X(c));
  const x = X(c - w / 2);
  bodies.push([X(c), x, X(c + w / 2) - x, Y(hi), Y(top), Y(bot), Y(lo), item[0] === 'r' ? '#f23645' : '#089981']);
}
for (const [c, x, w, hi, top, bot, lo, col] of bodies) {
  rect(c, hi, 1, lo - hi, col);
  rect(x, top, w, Math.max(1, bot - top), col);
}

const red = 'rgba(242,54,69,';
rect(58, 82, 644, 452, red + '.1)');
rect(58, 82, 644, 706, red + '.05)');
rect(701, 583, 1750, 579, red + '.05)');
rect(701, 718, 1750, 202, red + '.1)');

line(660, 534, 2451, 534, '#14b8d6', 2);
line(58, 534.5, 2451, 534.5, '#ffb833', 3, '3 6');
line(58, 544.5, 684, 544.5, '#a8934a', 1, '6 5');
line(684, 1094.5, 1901, 1094.5, '#b8a24a', 1, '6 5');

const green = 'rgba(76,175,80,.15)', pink = 'rgba(233,30,99,.18)';
rect(1743, 791, 76, 188, green); rect(1743, 979, 76, 81, pink);
rect(1811, 757, 230, 136, green); rect(1811, 893, 230, 66, pink); rect(1884, 893, 157, 27, pink);
for (const [x, y, w, h] of [[548.5, 888.5, 1449, 9], [1137.5, 990.5, 795, 12]]) rect(x, y, w, h, 'rgba(255,152,0,.2)', 'stroke="#ff9800"');
line(1743, 979.5, 1819, 979.5, '#7e7b88'); line(1811, 892.5, 2041, 892.5, '#87737f');
out.push('<path d="M1689.500 1037v-14M1686 1025.500l3.500-3.500 3.500 3.500" fill="none" stroke="#4caf50" stroke-width="3"/>');
line(1884, 893, 1901, 920, '#8a6070', 1, '4 3');

line(58, 778.5, 2430, 778.5, '#7d8794', 1, '6 5');
line(1201.5, 82, 1201.5, 1371, '#7d8794', 1, '5 6');
document.getElementById('plot').innerHTML = out.join('');

let ticks = '';
for (let p = 5780; p >= 5420; p -= 10) ticks += `<span>${p.toLocaleString('en-US')}</span>`;
document.getElementById('ticks').innerHTML = ticks;

const times = [['15:00', 75], ['15:02:30', 160], ['15:05', 213], ['15:07:30', 273], ['15:10', 344], ['15:12:30', 396], ['15:15', 443], ['15:17:30', 495], ['15:20', 548], ['15:23', 606], ['19', 701], ['09:02:30', 833], ['09:05', 922], ['09:07:30', 1042], ['09:10', 1136], ['09:12:30', 1253], ['09:15', 1327], ['09:17:30', 1407], ['09:20', 1473], ['09:22:30', 1541], ['09:25', 1607], ['09:27:30', 1670], ['09:30', 1732], ['09:32:30', 1810], ['09:35', 1884], ['09:37:30', 1943], ['09:40', 1997], ['09:42:30', 2051], ['09:45', 2105], ['09:47:30', 2159], ['09:50', 2213], ['09:52:30', 2267], ['09:55', 2321], ['09:57:30', 2375], ['10:00', 2429]];
document.getElementById('times').insertAdjacentHTML('beforeend', times.map(([t, x]) => `<span style="left:${(x - 58) / 23.93}%">${t}</span>`).join(''));
document.querySelector('.cursor').style.left = (1201 - 58) / 23.93 + '%';

const plus = '<svg viewBox="0 0 17 17"><circle cx="8.500" cy="8.500" r="7.500"/><path d="M8.500 5v7M5 8.500h7"/></svg>';
const tags = [['5,758', 169, '#e91e63'], ['5,738', 238, '#787b86'], ['5,725', 284, '#ff0000', 'week :LL'], ['5,702', 364, '#e91e63'], ['5,653', 534, '#fbc02d', '', '#222'], ['5,589', 757, '#4caf50'], ['5,579', 792, '#4caf50'], ['5,583', 778, '#363a45', plus, '', 'tall'], ['5,550', 892, '#787b86'], ['5,543', 915, '#2962ff', 'VWAP'], ['00:02', 920, '#ffeb3b', '', '#333'], ['5,531', 958, '#e91e63'], ['5,525', 979, '#787b86'], ['5,502', 1059, '#e91e63'], ['', 1361, '#2962ff', '', '', 'broad'], ['71.56 K', 1357, '#ffeb3b', 'Volume MA', '#222', 'broad']];
document.getElementById('tags').innerHTML = tags.map(([t, y, c, label, f, cls]) => `<div class="tag ${cls || ''}" style="top:${(y - 82) / 12.89}%;background:${c};color:${f || '#fff'}">${label ? `<b>${label}</b>` : ''}${t}</div>`).join('');
```
